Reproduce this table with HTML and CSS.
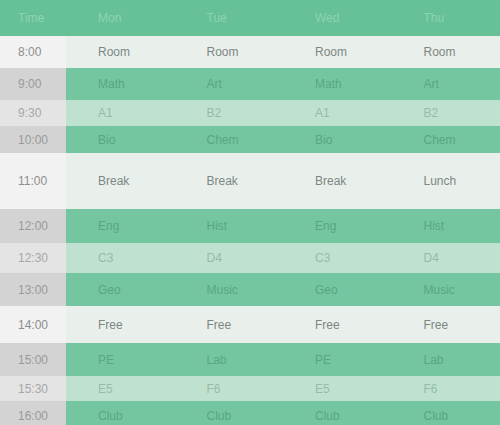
FILE: index.html
```html
<!DOCTYPE html>
<html>
<head>
<meta charset="utf-8">
<link rel="stylesheet" href="styles.css">
</head>
<body>
<div class="grid">
  <div class="row head"><div class="c h">Time</div><div class="c">Mon</div><div class="c">Tue</div><div class="c">Wed</div><div class="c">Thu</div></div>
  <div class="row white r32"><div class="c h">8:00</div><div class="c">Room</div><div class="c">Room</div><div class="c">Room</div><div class="c">Room</div></div>
  <div class="row green r32"><div class="c h">9:00</div><div class="c">Math</div><div class="c">Art</div><div class="c">Math</div><div class="c">Art</div></div>
  <div class="row light r26"><div class="c h">9:30</div><div class="c">A1</div><div class="c">B2</div><div class="c">A1</div><div class="c">B2</div></div>
  <div class="row green r27"><div class="c h">10:00</div><div class="c">Bio</div><div class="c">Chem</div><div class="c">Bio</div><div class="c">Chem</div></div>
  <div class="row white r56"><div class="c h">11:00</div><div class="c">Break</div><div class="c">Break</div><div class="c">Break</div><div class="c">Lunch</div></div>
  <div class="row green r34"><div class="c h">12:00</div><div class="c">Eng</div><div class="c">Hist</div><div class="c">Eng</div><div class="c">Hist</div></div>
  <div class="row light r30"><div class="c h">12:30</div><div class="c">C3</div><div class="c">D4</div><div class="c">C3</div><div class="c">D4</div></div>
  <div class="row green r33"><div class="c h">13:00</div><div class="c">Geo</div><div class="c">Music</div><div class="c">Geo</div><div class="c">Music</div></div>
  <div class="row white r37"><div class="c h">14:00</div><div class="c">Free</div><div class="c">Free</div><div class="c">Free</div><div class="c">Free</div></div>
  <div class="row green r33"><div class="c h">15:00</div><div class="c">PE</div><div class="c">Lab</div><div class="c">PE</div><div class="c">Lab</div></div>
  <div class="row light r25"><div class="c h">15:30</div><div class="c">E5</div><div class="c">F6</div><div class="c">E5</div><div class="c">F6</div></div>
  <div class="row green r30"><div class="c h">16:00</div><div class="c">Club</div><div class="c">Club</div><div class="c">Club</div><div class="c">Club</div></div>
</div>
</body>
</html>
```
FILE: styles.css
```css
html, body {
  margin: 0;
  padding: 0;
  background: #f2f4f3;
  font-family: "Liberation Sans", Arial, sans-serif;
  font-size: 12px;
}
.grid {
  display: flex;
  flex-direction: column;
  width: 500px;
  height: 425px;
  overflow: hidden;
}
.row {
  display: grid;
  grid-template-columns: 66px repeat(4, 1fr);
  flex: none;
}
.c {
  display: flex;
  align-items: center;
  padding-left: 32px;
}
.c.h {
  padding-left: 18px;
}
.head {
  height: 36px;
  background: #66c197;
}
.head .c {
  color: #8fd3b2;
}
.white .c { background: #e9f0ec; color: #7d8682; }
.white .c.h { background: #f2f2f2; color: #8e8e8e; }
.green .c { background: #74c6a0; color: #58a682; }
.green .c.h { background: #d3d3d3; color: #9a9a9a; }
.light .c { background: #bfe2d0; color: #95bca9; }
.light .c.h { background: #e4e4e4; color: #a8a8a8; }
.r25 { height: 25px; }
.r26 { height: 26px; }
.r27 { height: 27px; }
.r30 { height: 30px; }
.r32 { height: 32px; }
.r33 { height: 33px; }
.r34 { height: 34px; }
.r37 { height: 37px; }
.r56 { height: 56px; }
```
